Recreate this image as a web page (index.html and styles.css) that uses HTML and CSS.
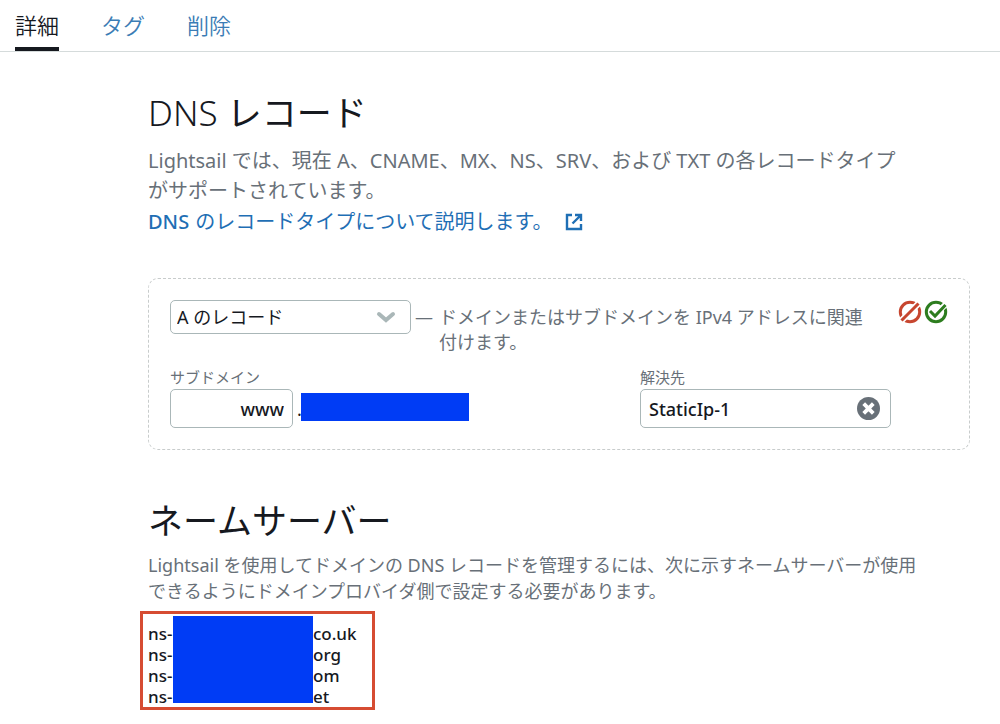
FILE: index.html
```html
<!DOCTYPE html>
<html lang="ja">
<head>
<meta charset="utf-8">
<meta name="viewport" content="width=device-width, initial-scale=1">
<title>DNS レコード</title>
<link rel="stylesheet" href="styles.css">
</head>
<body>
<nav class="tabs">
  <a class="tab tab-active" href="#details" aria-current="page">詳細</a>
  <a class="tab" href="#tags">タグ</a>
  <a class="tab" href="#delete">削除</a>
</nav>
<main class="content">
  <section class="records">
    <h1 class="title title-mixed">DNS <span class="title-kana">レコード</span></h1>
    <p class="lead">Lightsail では、現在 A、CNAME、MX、NS、SRV、および TXT の各レコードタイプがサポートされています。</p>
    <a class="learn" href="#learn">DNS <span class="regular">のレコードタイプについて説明します。</span>
      <svg class="external" viewBox="0 0 18 18" aria-hidden="true"><path d="M7 2H2v14h14v-5M10 2h6v6M15.500 2.500L7.500 10.500"/></svg>
    </a>
    <form class="record">
      <div class="record-top">
        <div class="select-wrap">
          <select class="field type" aria-label="レコードタイプ"><option>A のレコード</option></select>
          <svg class="chevron" viewBox="0 0 20 12" aria-hidden="true"><path d="M3 3l7 6 7-6"/></svg>
        </div>
        <span class="dash">—</span>
        <p class="hint">ドメインまたはサブドメインを IPv4 アドレスに関連付けます。</p>
        <div class="actions">
          <button class="icon-button cancel" type="button" aria-label="キャンセル">
            <svg viewBox="0 0 24 24" aria-hidden="true"><circle cx="12" cy="12" r="9.700"/><path class="gap" d="M1 20L20 1M4 23L23 4"/><path d="M3.500 20.500L20.500 3.500"/></svg>
          </button>
          <button class="icon-button save" type="button" aria-label="保存">
            <svg viewBox="0 0 24 24" aria-hidden="true"><circle cx="12" cy="12" r="9.700"/><path class="gap wide" d="M11 15L23 3"/><path d="M6 11l5 5L21.500 5"/></svg>
          </button>
        </div>
      </div>
      <div class="record-fields">
        <div class="group">
          <label class="label" for="subdomain">サブドメイン</label>
          <div class="domain">
            <input class="field subdomain" id="subdomain" type="text" value="www">
            <span class="dot">.</span>
            <span class="mask"></span>
          </div>
        </div>
        <div class="group target-group">
          <label class="label" for="target">解決先</label>
          <div class="target-wrap">
            <input class="field target" id="target" type="text" value="StaticIp-1">
            <button class="clear" type="button" aria-label="クリア">
              <svg viewBox="0 0 24 24" aria-hidden="true"><circle cx="12" cy="12" r="12"/><path d="M7 7l10 10M17 7L7 17"/></svg>
            </button>
          </div>
        </div>
      </div>
    </form>
  </section>
  <section class="servers">
    <h2 class="title title-kana">ネームサーバー</h2>
    <p class="note">Lightsail を使用してドメインの DNS レコードを管理するには、次に示すネームサーバーが使用できるようにドメインプロバイダ側で設定する必要があります。</p>
    <div class="server-box">
      <ul class="server-list">
        <li class="server"><span>ns-</span><span>co.uk</span></li>
        <li class="server"><span>ns-</span><span>org</span></li>
        <li class="server"><span>ns-</span><span>om</span></li>
        <li class="server"><span>ns-</span><span>et</span></li>
      </ul>
      <span class="server-mask"></span>
    </div>
  </section>
</main>
</body>
</html>
```
FILE: styles.css
```css
* {
  box-sizing: border-box;
}

body {
  margin: 0;
  background: #fff;
  color: #16191f;
  font-family: "Noto Sans", "Noto Sans CJK JP", sans-serif;
  font-size: 18px;
}

button,
input,
select {
  font: inherit;
  color: inherit;
}

.tabs {
  display: flex;
  gap: 42px;
  height: 52px;
  padding-left: 15px;
  border-bottom: 1px solid #d5dbdb;
}

.tab {
  height: 51px;
  color: #3b7cb5;
  font-family: "Noto Sans CJK JP", sans-serif;
  font-size: 22px;
  font-weight: 350;
  line-height: 48px;
  text-decoration: none;
}

.tab-active {
  border-bottom: 4px solid #16191f;
  color: #16191f;
}

.content {
  padding: 36px 30px 12px 148px;
}

.title {
  margin: 0;
  font-size: 35px;
  line-height: 50px;
}

.title-mixed {
  font-weight: 300;
}

.title-kana {
  font-weight: 400;
}

.lead {
  margin: 8px 0 0;
  padding-right: 60px;
  color: #687078;
  font-size: 20px;
  line-height: 30px;
}

.learn {
  display: flex;
  align-items: center;
  gap: 6px;
  width: fit-content;
  color: #1f6fb5;
  font-size: 20px;
  font-weight: 500;
  line-height: 32px;
  text-decoration: none;
}

.regular {
  font-weight: 400;
}

.external {
  width: 18px;
  height: 18px;
  margin-left: 6px;
  fill: none;
  stroke: currentColor;
  stroke-width: 2.4;
}

.record {
  margin-top: 40px;
  padding: 21px;
  border: 1px dashed #c8cccc;
  border-radius: 10px;
}

.record-top {
  display: flex;
  align-items: flex-start;
}

.select-wrap,
.target-wrap {
  position: relative;
}

.field {
  display: block;
  height: 39px;
  border: 1px solid #aab7b8;
  border-radius: 5px;
  background: #fff;
}

.type {
  width: 241px;
  height: 34px;
  padding: 0 6px;
  appearance: none;
}

.chevron {
  position: absolute;
  top: 11px;
  right: 15px;
  width: 20px;
  height: 12px;
  fill: none;
  stroke: #aab7b8;
  stroke-width: 4;
  stroke-linecap: round;
  pointer-events: none;
}

.dash,
.hint {
  margin: 5px 0 0;
  color: #687078;
  line-height: 25px;
}

.dash {
  width: 28px;
  padding-left: 4px;
}

.hint {
  flex: 1;
  padding-right: 32px;
}

.actions {
  display: flex;
  gap: 2px;
}

.icon-button,
.clear {
  padding: 0;
  border: 0;
  background: none;
}

.icon-button {
  width: 24px;
  height: 24px;
  fill: none;
  stroke: currentColor;
  stroke-width: 3;
}

.icon-button svg,
.clear svg {
  display: block;
}

.cancel {
  color: #c7462f;
}

.save {
  color: #2d7d1f;
}

.gap {
  stroke: #fff;
  stroke-width: 2;
}

.wide {
  stroke-width: 6;
}

.record-fields {
  display: flex;
  margin-top: 10px;
}

.group {
  flex: 470 1 0;
}

.target-group {
  flex-grow: 308;
}

.label {
  display: block;
  color: #687078;
  font-size: 15px;
  line-height: 24px;
}

.domain {
  display: flex;
  align-items: center;
}

.subdomain {
  width: 123px;
  padding: 0 8px;
  font-weight: 500;
  text-align: right;
}

.dot {
  width: 8px;
  padding-left: 4px;
}

.mask {
  width: 168px;
  height: 28px;
  margin-bottom: 4px;
  background: #003cf5;
}

.target-wrap {
  width: 251px;
}

.target {
  width: 100%;
  padding: 0 40px 0 8px;
  font-weight: 500;
}

.clear {
  position: absolute;
  top: 8px;
  right: 11px;
  width: 23px;
  height: 23px;
  fill: #687078;
  stroke: none;
}

.clear path {
  stroke: #fff;
  stroke-width: 4;
}

.servers {
  margin-top: 46px;
}

.note {
  margin: 6px 0 0;
  padding-right: 50px;
  color: #687078;
  line-height: 26px;
}

.server-box {
  position: relative;
  width: 235px;
  margin: 7px 0 0 -8px;
  padding: 9px 5px 0;
  border: 3px solid #d64c32;
}

.server-list {
  margin: 0;
  padding: 0;
  font-size: 17px;
  font-weight: 500;
  list-style: none;
}

.server {
  display: grid;
  grid-template-columns: 165px 1fr;
  line-height: 21px;
}

.server-mask {
  position: absolute;
  top: 2px;
  bottom: 4px;
  left: 30px;
  width: 140px;
  background: #003cf5;
}
```
